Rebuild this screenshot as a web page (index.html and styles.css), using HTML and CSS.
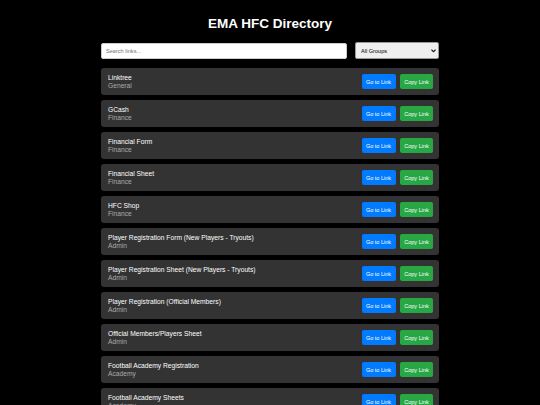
FILE: index.html
```html
<!DOCTYPE html>
<html lang="en">
<head>
<meta charset="utf-8">
<title>EMA HFC Directory</title>
<link rel="stylesheet" href="styles.css">
</head>
<body>
<div class="container">
  <h1 class="title">EMA HFC Directory</h1>
  <div class="controls">
    <input class="search" type="text" placeholder="Search links...">
    <div class="select-wrap">
      <select class="group-select">
        <option>All Groups</option>
      </select>
      <svg class="chevron" width="5" height="4" viewBox="0 0 10 8"><path d="M1.5 2 L5 5.5 L8.5 2" fill="none" stroke="#222" stroke-width="2.2" stroke-linecap="round" stroke-linejoin="round"/></svg>
    </div>
  </div>
  <div class="list">
    <div class="card"><div class="info"><div class="name">Linktree</div><div class="group">General</div></div><div class="actions"><button class="btn btn-go">Go to Link</button><button class="btn btn-copy">Copy Link</button></div></div>
    <div class="card"><div class="info"><div class="name">GCash</div><div class="group">Finance</div></div><div class="actions"><button class="btn btn-go">Go to Link</button><button class="btn btn-copy">Copy Link</button></div></div>
    <div class="card"><div class="info"><div class="name">Financial Form</div><div class="group">Finance</div></div><div class="actions"><button class="btn btn-go">Go to Link</button><button class="btn btn-copy">Copy Link</button></div></div>
    <div class="card"><div class="info"><div class="name">Financial Sheet</div><div class="group">Finance</div></div><div class="actions"><button class="btn btn-go">Go to Link</button><button class="btn btn-copy">Copy Link</button></div></div>
    <div class="card"><div class="info"><div class="name">HFC Shop</div><div class="group">Finance</div></div><div class="actions"><button class="btn btn-go">Go to Link</button><button class="btn btn-copy">Copy Link</button></div></div>
    <div class="card"><div class="info"><div class="name">Player Registration Form (New Players - Tryouts)</div><div class="group">Admin</div></div><div class="actions"><button class="btn btn-go">Go to Link</button><button class="btn btn-copy">Copy Link</button></div></div>
    <div class="card"><div class="info"><div class="name">Player Registration Sheet (New Players - Tryouts)</div><div class="group">Admin</div></div><div class="actions"><button class="btn btn-go">Go to Link</button><button class="btn btn-copy">Copy Link</button></div></div>
    <div class="card"><div class="info"><div class="name">Player Registration (Official Members)</div><div class="group">Admin</div></div><div class="actions"><button class="btn btn-go">Go to Link</button><button class="btn btn-copy">Copy Link</button></div></div>
    <div class="card"><div class="info"><div class="name">Official Members/Players Sheet</div><div class="group">Admin</div></div><div class="actions"><button class="btn btn-go">Go to Link</button><button class="btn btn-copy">Copy Link</button></div></div>
    <div class="card"><div class="info"><div class="name">Football Academy Registration</div><div class="group">Academy</div></div><div class="actions"><button class="btn btn-go">Go to Link</button><button class="btn btn-copy">Copy Link</button></div></div>
    <div class="card"><div class="info"><div class="name">Football Academy Sheets</div><div class="group">Academy</div></div><div class="actions"><button class="btn btn-go">Go to Link</button><button class="btn btn-copy">Copy Link</button></div></div>
  </div>
</div>
</body>
</html>
```
FILE: styles.css
```css
html, body {
  margin: 0;
  padding: 0;
  background: #000;
  color: #fff;
  font-family: "Liberation Sans", Arial, sans-serif;
}
.container {
  width: 338px;
  margin: 0 auto;
  padding-top: 16px;
}
.title {
  margin: 0 0 10px;
  font-size: 13.5px;
  line-height: 16px;
  font-weight: bold;
  text-align: center;
}
.controls {
  display: flex;
  align-items: center;
  gap: 8px;
  height: 17px;
  margin-bottom: 9px;
}
.search {
  display: block;
  flex: 1;
  height: 16px;
  box-sizing: border-box;
  border: 1px solid #ccc;
  border-radius: 2px;
  padding: 0 4px;
  font-family: "Liberation Sans", Arial, sans-serif;
  font-size: 5.6px;
  background: #fff;
  color: #000;
  outline: none;
}
.search::placeholder { color: #757575; }
.select-wrap {
  position: relative;
  width: 84px;
  height: 17px;
}
.group-select {
  display: block;
  -webkit-appearance: none;
  appearance: none;
  width: 100%;
  height: 17px;
  margin: 0;
  box-sizing: border-box;
  border: 1px solid #999;
  border-radius: 2px;
  padding: 0 5px;
  font-family: "Liberation Sans", Arial, sans-serif;
  font-size: 5.6px;
  background: #efefef;
  color: #000;
}
.chevron {
  position: absolute;
  right: 3px;
  top: 7px;
  pointer-events: none;
}
.list {
  display: flex;
  flex-direction: column;
  gap: 5px;
}
.card {
  display: flex;
  align-items: center;
  justify-content: space-between;
  height: 27px;
  box-sizing: border-box;
  padding: 0 6px 0 7px;
  background: #333;
  border-radius: 3px;
}
.name {
  font-size: 6.7px;
  line-height: 8px;
  color: #fff;
}
.group {
  font-size: 6.7px;
  line-height: 8px;
  color: #aaa;
}
.actions {
  display: flex;
  gap: 4.5px;
}
.btn {
  height: 14.5px;
  width: 34px;
  padding: 0;
  border: none;
  border-radius: 2px;
  color: #fff;
  font-family: "Liberation Sans", Arial, sans-serif;
  font-size: 5.5px;
  cursor: pointer;
}
.btn-go { background: #007bff; }
.btn-copy { background: #28a745; width: 33px; }
```
